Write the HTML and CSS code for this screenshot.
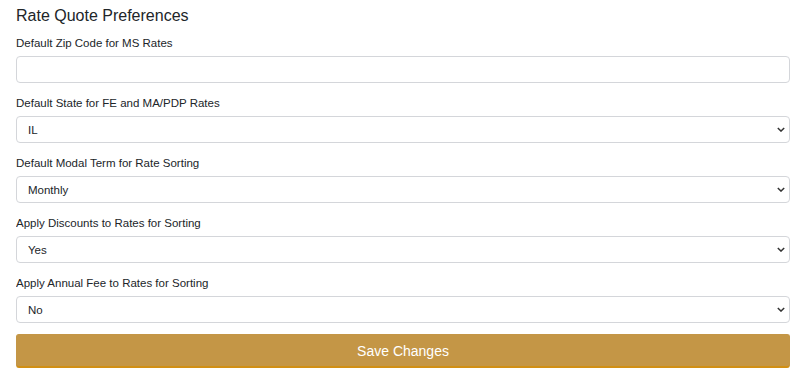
FILE: index.html
```html
<!DOCTYPE html>
<html lang="en">
<head>
    <meta charset="UTF-8">
    <title>Rate Quote Preferences</title>
    <link rel="stylesheet" href="styles.css">
</head>
<body>
    <h2 class="title">Rate Quote Preferences</h2>
    <form class="prefs">
        <div class="field">
            <label for="zip">Default Zip Code for MS Rates</label>
            <input type="text" id="zip" class="control">
        </div>
        <div class="field">
            <label for="state">Default State for FE and MA/PDP Rates</label>
            <div class="select-wrap">
                <select id="state" class="control"><option>IL</option></select>
                <svg class="chevron" viewBox="0 0 10 6" width="8" height="5"><path d="M1 1l4 4 4-4" fill="none" stroke="#333" stroke-width="1.8"/></svg>
            </div>
        </div>
        <div class="field">
            <label for="modal">Default Modal Term for Rate Sorting</label>
            <div class="select-wrap">
                <select id="modal" class="control"><option>Monthly</option></select>
                <svg class="chevron" viewBox="0 0 10 6" width="8" height="5"><path d="M1 1l4 4 4-4" fill="none" stroke="#333" stroke-width="1.8"/></svg>
            </div>
        </div>
        <div class="field">
            <label for="discounts">Apply Discounts to Rates for Sorting</label>
            <div class="select-wrap">
                <select id="discounts" class="control"><option>Yes</option></select>
                <svg class="chevron" viewBox="0 0 10 6" width="8" height="5"><path d="M1 1l4 4 4-4" fill="none" stroke="#333" stroke-width="1.8"/></svg>
            </div>
        </div>
        <div class="field">
            <label for="fee">Apply Annual Fee to Rates for Sorting</label>
            <div class="select-wrap">
                <select id="fee" class="control"><option>No</option></select>
                <svg class="chevron" viewBox="0 0 10 6" width="8" height="5"><path d="M1 1l4 4 4-4" fill="none" stroke="#333" stroke-width="1.8"/></svg>
            </div>
        </div>
        <button type="button" class="save">Save Changes</button>
    </form>
</body>
</html>
```

FILE: styles.css
```css
body {
    font-family: "Liberation Sans", Arial, sans-serif;
    color: #212529;
    margin: 0 10px 0 16px;
    background: #fff;
}
.title {
    font-size: 16px;
    font-weight: 400;
    margin: 4px 0 6px;
    line-height: 24px;
}
.field {
    margin-bottom: 11px;
}
.field label {
    display: block;
    font-size: 11.5px;
    line-height: 18px;
    margin-bottom: 4px;
}
.control {
    display: block;
    width: 100%;
    box-sizing: border-box;
    height: 27px;
    border: 1px solid #d4d6da;
    border-radius: 4px;
    background: #fff;
    font-family: inherit;
    font-size: 11.5px;
    color: #212529;
    padding: 0 11px;
    appearance: none;
    -webkit-appearance: none;
    margin: 0;
}
.select-wrap {
    position: relative;
}
.chevron {
    position: absolute;
    right: 5px;
    top: 11px;
}
.save {
    display: block;
    width: 100%;
    height: 34px;
    margin-top: 10px;
    background: #c49646;
    border: 1px solid #c49646;
    border-bottom: 2px solid #d18f14;
    border-radius: 3px;
    color: #fff;
    font-family: inherit;
    font-size: 14px;
}
```
